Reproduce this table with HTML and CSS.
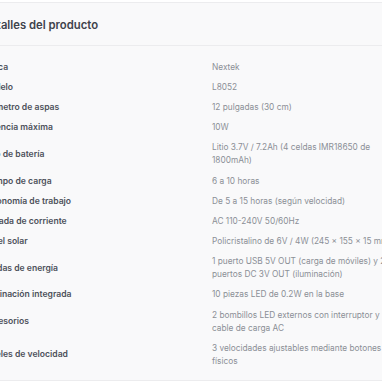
FILE: index.html
```html
<!DOCTYPE html>
<html lang="es">
<head>
<meta charset="utf-8">
<link rel="stylesheet" href="styles.css">
</head>
<body>
<section class="card">
  <header class="card-head">
    <h2 class="title">Detalles del producto</h2>
  </header>
  <dl class="specs">
    <div class="row"><dt>Marca</dt><dd>Nextek</dd></div>
    <div class="row"><dt>Modelo</dt><dd>L8052</dd></div>
    <div class="row"><dt>Diámetro de aspas</dt><dd>12 pulgadas (30 cm)</dd></div>
    <div class="row"><dt>Potencia máxima</dt><dd>10W</dd></div>
    <div class="row"><dt>Tipo de batería</dt><dd>Litio 3.7V / 7.2Ah (4 celdas IMR18650 de 1800mAh)</dd></div>
    <div class="row"><dt>Tiempo de carga</dt><dd>6 a 10 horas</dd></div>
    <div class="row"><dt>Autonomía de trabajo</dt><dd>De 5 a 15 horas (según velocidad)</dd></div>
    <div class="row"><dt>Entrada de corriente</dt><dd>AC 110-240V 50/60Hz</dd></div>
    <div class="row"><dt>Panel solar</dt><dd>Policristalino de 6V / 4W (245 x 155 x 15 mm)</dd></div>
    <div class="row"><dt>Salidas de energía</dt><dd>1 puerto USB 5V OUT (carga de móviles) y 2 puertos DC 3V OUT (iluminación)</dd></div>
    <div class="row"><dt>Iluminación integrada</dt><dd>10 piezas LED de 0.2W en la base</dd></div>
    <div class="row"><dt>Accesorios</dt><dd>2 bombillos LED externos con interruptor y cable de carga AC</dd></div>
    <div class="row"><dt>Niveles de velocidad</dt><dd>3 velocidades ajustables mediante botones físicos</dd></div>
  </dl>
</section>
</body>
</html>
```
FILE: styles.css
```css
html, body {
  margin: 0;
  padding: 0;
  background: #ffffff;
  overflow: hidden;
}
body {
  font-family: Inter, "Noto Sans", sans-serif;
  padding-top: 2px;
}
.card {
  margin-left: -35px;
  width: 460px;
  background: #f9f9fa;
  border-top: 1px solid #ececee;
  border-bottom: 1px solid #ececee;
}
.card-head {
  padding: 12px 17px 10px;
  border-bottom: 1px solid #ececee;
}
.title {
  margin: 0;
  font-size: 11.3px;
  line-height: 20px;
  font-weight: 600;
  color: #3e424b;
}
.specs {
  margin: 0;
  padding: 11px 17px 9px;
}
.row {
  display: grid;
  grid-template-columns: 230px 190px;
  align-items: center;
  padding: 3.6px 0;
}
dt {
  font-size: 8.6px;
  line-height: 13px;
  font-weight: 600;
  color: #4d515a;
}
dd {
  margin: 0;
  font-size: 8.3px;
  line-height: 13px;
  color: #8b8f96;
}
```
